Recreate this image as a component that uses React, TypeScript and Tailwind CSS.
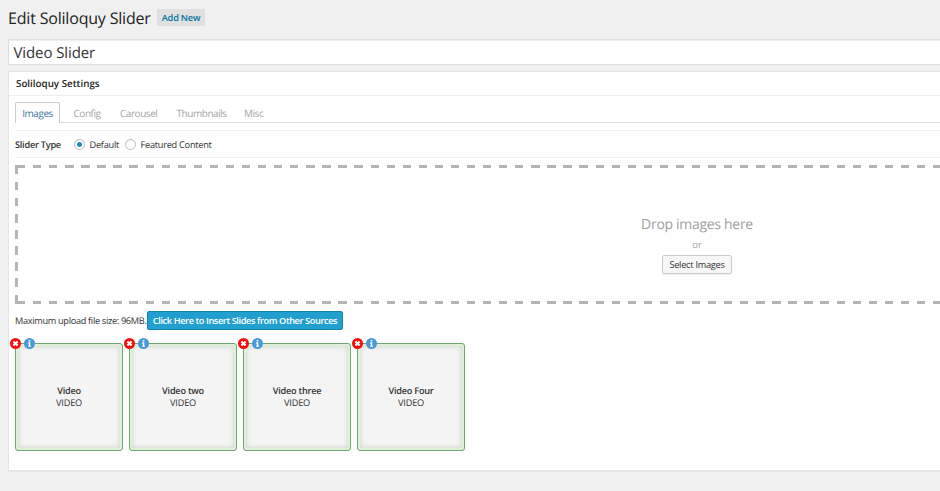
const tabs = [
  { label: "Config", cls: "ml-[13.5px] w-[27px]" },
  { label: "Carousel", cls: "ml-[19.5px] w-[37px]" },
  { label: "Thumbnails", cls: "ml-[19.5px] w-[48px]" },
  { label: "Misc", cls: "ml-[19.5px] w-[20px]" },
];

const slides = ["Video", "Video two", "Video three", "Video Four"];

function Slide({ title }: { title: string }) {
  return (
    <li className="relative flex h-[108px] w-[108px] flex-col items-center justify-center rounded-[3px] border border-[#6fa673] bg-[#f4f4f4] text-center text-[9.2px] leading-[12px] text-[#333] shadow-[inset_0_0_0_2px_#dff0d8,inset_0_0_4px_3px_#d3ddce]">
      <svg className="absolute -left-[6px] -top-[6px] h-[11px] w-[11px]" viewBox="0 0 11 11">
        <circle cx="5.5" cy="5.5" r="5.5" fill="#f50d0d" />
        <path d="M3.4 3.4l4.2 4.2M7.6 3.4L3.4 7.6" stroke="#fff" strokeWidth="2.1" />
      </svg>
      <svg className="absolute left-[7.5px] -top-[6px] h-[11px] w-[11px]" viewBox="0 0 11 11">
        <circle cx="5.5" cy="5.5" r="5.5" fill="#4799da" />
        <path d="M4.7 2h1.6v1.4H4.7zM4.1 4.3h2.2v3.4h.7v1.1H4.1V7.7h.7V5.4h-.7z" fill="#fff" />
      </svg>
      <strong className="font-semibold tracking-[-0.25px]">{title}</strong>
      <span className="tracking-[-0.2px]">VIDEO</span>
    </li>
  );
}

function Radio({ checked }: { checked?: boolean }) {
  return (
    <span className="flex h-[11px] w-[11px] items-center justify-center rounded-full border border-[#bbb] bg-white shadow-[inset_0_1px_1px_#0000000d]">
      {checked && <span className="h-[5px] w-[5px] rounded-full bg-[#1e8cbe]" />}
    </span>
  );
}

export default function App() {
  return (
    <div className="h-[491px] w-full overflow-hidden bg-[#f0f0f0] pl-2 font-['Open_Sans',sans-serif] text-[9.2px] tracking-[-0.25px] text-[#333] [text-rendering:geometricPrecision]">
      <header className="flex h-[39px] items-center gap-[7px] whitespace-nowrap pb-[4px]">
        <h1 className="w-[142px] text-[16px] leading-[20px] tracking-[-0.19px] text-[#222]">Edit Soliloquy Slider</h1>
        <button className="h-[17px] w-[48px] rounded-[1px] bg-[#e0e0e0] text-[9.2px] font-semibold leading-[17px] tracking-[-0.2px] text-[#0074a2]">
          Add New
        </button>
      </header>

      <div className="flex h-[26px] w-[1379px] items-center border border-[#ddd] bg-white pl-[4.5px] pt-px text-[15px] leading-[24px] tracking-[-0.1px] text-[#333] shadow-[inset_0_1px_1px_#00000012]">
        Video Slider
      </div>

      <section className="mt-[6px] h-[400px] w-[1379px] border border-[#e5e5e5] bg-white shadow-[0_1px_1px_#0000000a]">
        <h2 className="h-[24px] border-b border-[#eee] pl-[7px] text-[9.8px] font-semibold leading-[23px] tracking-normal text-[#222]">
          Soliloquy Settings
        </h2>

        <div className="ml-[6px] w-[1364px]">
          <nav className="mt-[6px] flex h-[21px] whitespace-nowrap border-b border-[#ddd] text-[10px] leading-[20px] tracking-[-0.45px] text-[#a5a5a5]">
            <a className="h-[21px] w-[45px] rounded-t-[2px] border border-b-0 border-[#ccc] bg-white text-center text-[#41799f]">
              Images
            </a>
            {tabs.map((t) => (
              <a key={t.label} className={t.cls + " pt-px"}>
                {t.label}
              </a>
            ))}
          </nav>

          <div className="mt-[7px] flex h-[28px] items-center whitespace-nowrap border-y border-[#f1f1f1] pt-px">
            <strong className="w-[59px] font-semibold">Slider Type</strong>
            <Radio checked />
            <span className="ml-[4.5px] w-[35.5px]">Default</span>
            <Radio />
            <span className="ml-[4.5px]">Featured Content</span>
          </div>

          <div className="mt-[7px] flex h-[139px] flex-col items-center bg-[image:linear-gradient(#b5b5b5,#b5b5b5),linear-gradient(#b5b5b5,#b5b5b5),repeating-linear-gradient(90deg,#b5b5b5_0_8.3px,transparent_8.3px_16.07px),repeating-linear-gradient(90deg,#b5b5b5_0_8.3px,transparent_8.3px_16.07px),repeating-linear-gradient(180deg,#b5b5b5_0_8.3px,transparent_8.3px_16.07px)] bg-[size:3px_3px,3px_3px,100%_3px,100%_3px,3px_137px] bg-[position:0_0,0_136px,1.9px_0,1.9px_136px,0_1.2px] bg-no-repeat pt-[50px] text-[#a0a0a0]">
            <p className="text-[14px] leading-[20px] tracking-[-0.3px]">Drop images here</p>
            <p className="mt-[3px] text-[9.4px] leading-[13px] tracking-normal">or</p>
            <button className="mt-[4px] h-[19px] w-[70px] rounded-[2px] border border-[#ccc] bg-[#f7f7f7] text-[9.2px] leading-[17px] text-[#333] shadow-[0_1px_0_#0000000f]">
              Select Images
            </button>
          </div>

          <div className="mt-[7px] flex h-[19px] items-center whitespace-nowrap">
            <span className="w-[132px] tracking-[-0.31px]">Maximum upload file size: 96MB.</span>
            <button className="h-[19px] w-[196px] rounded-[2px] border border-[#1386b0] bg-[#21a0d0] text-[9.2px] font-semibold leading-[17px] tracking-[-0.39px] text-white">
              Click Here to Insert Slides from Other Sources
            </button>
          </div>

          <ul className="mt-[13px] flex gap-[6px]">
            {slides.map((s) => (
              <Slide key={s} title={s} />
            ))}
          </ul>
        </div>
      </section>
    </div>
  );
}
